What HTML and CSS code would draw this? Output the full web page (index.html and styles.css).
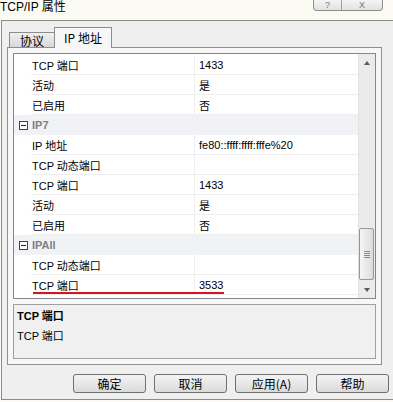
FILE: index.html
```html
<!DOCTYPE html>
<html lang="zh-CN">
<head>
    <meta charset="UTF-8">
    <title>TCP/IP 属性</title>
    <link rel="stylesheet" href="styles.css">
</head>
<body>
    <div class="titlebar">
        <span class="title">TCP/IP 属性</span>
        <div class="caption-btns">
            <span class="cap help">?</span>
            <span class="cap close">X</span>
        </div>
    </div>

    <div class="dialog">
        <div class="tabs">
            <div class="tab">协议</div>
            <div class="tab active">IP 地址</div>
        </div>

        <div class="panel">
            <div class="grid">
                <div class="rows">
                    <div class="row"><span class="gutter"></span><span class="name">TCP 端口</span><span class="value">1433</span></div>
                    <div class="row"><span class="gutter"></span><span class="name">活动</span><span class="value">是</span></div>
                    <div class="row"><span class="gutter"></span><span class="name">已启用</span><span class="value">否</span></div>
                    <div class="row category"><span class="gutter"><i class="toggle"><b></b></i></span><span class="name">IP7</span><span class="value"></span></div>
                    <div class="row"><span class="gutter"></span><span class="name">IP 地址</span><span class="value">fe80::ffff:ffff:fffe%20</span></div>
                    <div class="row"><span class="gutter"></span><span class="name">TCP 动态端口</span><span class="value"></span></div>
                    <div class="row"><span class="gutter"></span><span class="name">TCP 端口</span><span class="value">1433</span></div>
                    <div class="row"><span class="gutter"></span><span class="name">活动</span><span class="value">是</span></div>
                    <div class="row"><span class="gutter"></span><span class="name">已启用</span><span class="value">否</span></div>
                    <div class="row category"><span class="gutter"><i class="toggle"><b></b></i></span><span class="name">IPAll</span><span class="value"></span></div>
                    <div class="row"><span class="gutter"></span><span class="name">TCP 动态端口</span><span class="value"></span></div>
                    <div class="row marked"><span class="gutter"></span><span class="name">TCP 端口</span><span class="value">3533</span><span class="redline"></span></div>
                </div>
                <div class="scrollbar">
                    <div class="sb-btn"><span class="arrow up"></span></div>
                    <div class="sb-track">
                        <div class="sb-thumb"><span class="grip"></span></div>
                    </div>
                    <div class="sb-btn"><span class="arrow down"></span></div>
                </div>
            </div>

            <div class="desc">
                <div class="desc-title">TCP 端口</div>
                <div class="desc-text">TCP 端口</div>
            </div>
        </div>

        <div class="buttons">
            <button class="btn">确定</button>
            <button class="btn">取消</button>
            <button class="btn">应用(A)</button>
            <button class="btn">帮助</button>
        </div>
    </div>
</body>
</html>
```

FILE: styles.css
```css
body {
    margin: 0;
    width: 393px;
    height: 402px;
    overflow: hidden;
    background-color: #fbfbf4;
    font-family: "Liberation Sans", "Noto Sans CJK SC", sans-serif;
    font-size: 11px;
    color: #000;
}

/* window caption */
.titlebar {
    height: 20px;
    display: flex;
    justify-content: space-between;
    align-items: flex-start;
}
.title {
    font-size: 12px;
    line-height: 14px;
}
.caption-btns {
    display: flex;
    margin-right: 10px;
    height: 10px;
    border: 1px solid #8d8d8d;
    border-top: none;
    border-radius: 0 0 4px 4px;
    background: linear-gradient(#f4f4f4, #e2e2e2);
}
.cap {
    display: flex;
    align-items: center;
    justify-content: center;
    color: #777;
    font-size: 9px;
    line-height: 10px;
}
.help {
    width: 27px;
    border-right: 1px solid #a0a0a0;
}
.close {
    width: 40px;
}

/* dialog body */
.dialog {
    margin-left: 1px;
    width: 390px;
    height: 378px;
    border: 1px solid #8b8b8b;
    background-color: #efefef;
    padding: 0 0 0 5px;
    box-sizing: content-box;
    display: flex;
    flex-direction: column;
}

.tabs {
    height: 26px;
    display: flex;
    align-items: flex-end;
    padding-left: 2px;
    font-family: "Noto Sans CJK SC", sans-serif;
    font-size: 12px;
}
.tab {
    width: 46px;
    height: 15px;
    line-height: 15px;
    text-align: center;
    border: 1px solid #8c8c8c;
    border-bottom: none;
    background: linear-gradient(#f0f0f0, #d8d8d8);
    box-sizing: border-box;
}
.tab.active {
    width: 58px;
    height: 21px;
    line-height: 19px;
    margin-bottom: -1px;
    margin-left: -1px;
    background: #f7f7f7;
    position: relative;
    z-index: 1;
}

.panel {
    width: 375px;
    height: 318px;
    box-sizing: border-box;
    border: 1px solid #8e8f8f;
    background-color: #f7f7f7;
    padding: 5px;
    display: flex;
    flex-direction: column;
    gap: 5px;
}

/* property grid */
.grid {
    height: 246px;
    border: 1px solid #828790;
    box-sizing: border-box;
    background: #fff;
    display: flex;
    overflow: hidden;
}
.rows {
    flex: 1;
    margin-top: 1px;
}
.row {
    height: 20px;
    display: flex;
    align-items: stretch;
    position: relative;
}
.gutter {
    width: 17px;
    display: flex;
    align-items: center;
    justify-content: center;
}
.name {
    width: 162px;
    padding-left: 1px;
    display: flex;
    align-items: center;
    border-bottom: 1px solid #eeeeee;
    border-right: 1px solid #eeeeee;
}
.value {
    flex: 1;
    padding-left: 4px;
    display: flex;
    align-items: center;
    border-bottom: 1px solid #eeeeee;
}
.category {
    background-color: #f1f2f6;
}
.category .name {
    font-weight: bold;
    color: #808080;
    border-right: none;
    border-bottom-color: #f1f2f6;
}
.category .value {
    border-bottom-color: #f1f2f6;
}
.toggle {
    width: 9px;
    height: 9px;
    border: 1px solid #444;
    box-sizing: border-box;
    display: flex;
    align-items: center;
    justify-content: center;
    background: #fff;
    margin-left: 1px;
}
.toggle b {
    width: 5px;
    height: 1px;
    background: #222;
}
.redline {
    position: absolute;
    left: 19px;
    bottom: 1px;
    width: 191px;
    height: 2px;
    background: #d4141e;
}

/* scrollbar */
.scrollbar {
    width: 16px;
    display: flex;
    flex-direction: column;
    background: #ebebeb;
    border-left: 1px solid #e2e2e2;
}
.sb-btn {
    height: 17px;
    display: flex;
    align-items: center;
    justify-content: center;
}
.arrow {
    width: 0;
    height: 0;
    border-left: 3px solid transparent;
    border-right: 3px solid transparent;
}
.arrow.up {
    border-bottom: 4px solid #5a5a5a;
}
.arrow.down {
    border-top: 4px solid #5a5a5a;
}
.sb-track {
    flex: 1;
    display: flex;
    flex-direction: column;
    padding-top: 157px;
}
.sb-thumb {
    height: 52px;
    margin: 0 1px 0 0;
    border: 1px solid #979797;
    border-radius: 2px;
    box-sizing: border-box;
    background: linear-gradient(to right, #f6f6f6, #dcdcdc);
    display: flex;
    align-items: center;
    justify-content: center;
}
.grip {
    width: 6px;
    height: 7px;
    background: repeating-linear-gradient(#8a8a8a 0 1px, transparent 1px 2px);
}

/* description pane */
.desc {
    height: 55px;
    border: 1px solid #a0a0a0;
    box-sizing: border-box;
    background: #f0f0f0;
    padding: 1px 3px;
}
.desc-title {
    font-weight: bold;
    line-height: 20px;
}
.desc-text {
    line-height: 20px;
}

/* bottom buttons */
.buttons {
    display: flex;
    justify-content: flex-end;
    gap: 8px;
    padding-right: 8px;
    margin-top: 9px;
}
.btn {
    width: 73px;
    height: 19px;
    border: 1px solid #707070;
    border-radius: 3px;
    background: linear-gradient(#f4f4f4, #dadada);
    font-family: "Noto Sans CJK SC", sans-serif;
    font-size: 12px;
    line-height: 15px;
    padding: 0;
    color: #000;
}
```
